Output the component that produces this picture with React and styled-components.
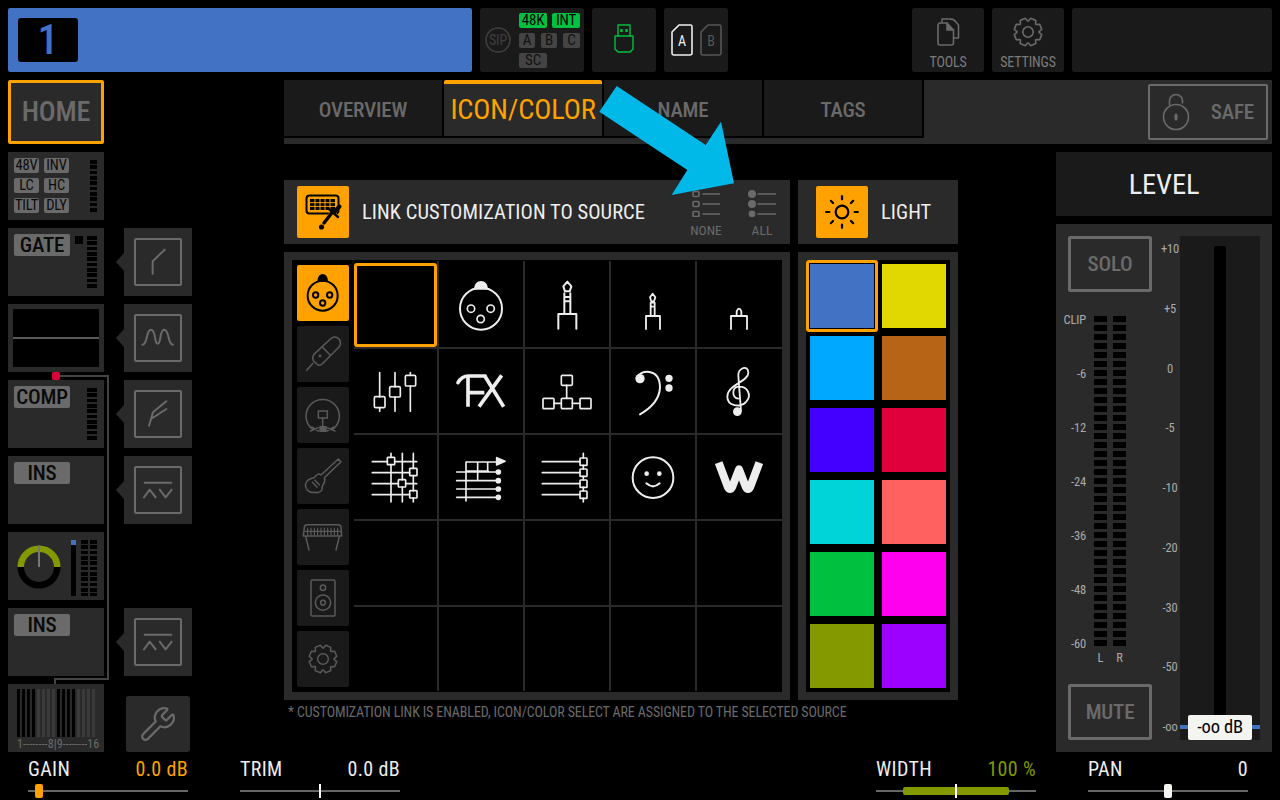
import React from "react";
import styled, { createGlobalStyle } from "styled-components";
import { Wrench, Sun } from "lucide-react";

const PANEL = "#2a2a2a";
const DARK = "#1a1a1a";
const MUTED = "#6a6a6a";
const ORANGE = "#ffa200";
const GREEN = "#00c040";
const OLIVE = "#849900";

const Global = createGlobalStyle`
  html, body { margin: 0; background: #000; }
  body { font-family: Roboto, "Liberation Sans", sans-serif; font-stretch: 85%; letter-spacing: -0.01em; }
  * { box-sizing: border-box; }
`;

const Screen = styled.div`
  position: relative;
  width: 1280px;
  height: 800px;
  background: #000;
  overflow: hidden;
`;

/* top bar */
const TopBar = styled.header`
  display: flex;
  gap: 8px;
  height: 80px;
  padding: 8px;
`;
const ChannelHeader = styled.div`
  width: 464px;
  background: #4272c4;
  border-radius: 2px;
  padding: 10px;
`;
const ChannelNumber = styled.div`
  width: 60px;
  height: 44px;
  background: #000;
  border-radius: 3px;
  color: #4272c4;
  font-size: 42px;
  font-weight: 500;
  line-height: 44px;
  text-align: center;
`;
const TopPanel = styled.div`
  width: ${(p) => p.$w}px;
  margin-left: ${(p) => p.$ml || 0}px;
  background: ${DARK};
  border-radius: 3px;
  display: flex;
  align-items: center;
  justify-content: center;
`;
const ToolPanel = styled(TopPanel)`
  flex-direction: column;
  justify-content: flex-start;
  padding-top: 9px;
`;
const ToolLabel = styled.span`
  color: #7a7a7a;
  font-size: 14px;
  line-height: 16px;
  margin-top: 7px;
`;
const SipPanel = styled(TopPanel)`
  justify-content: flex-start;
  padding-left: 5px;
  gap: 8px;
`;
const ChipStack = styled.div`
  display: flex;
  flex-direction: column;
  gap: 5px;
`;
const ChipRow = styled.div`
  display: flex;
  gap: ${(p) => p.$gap}px;
`;
const StatusChip = styled.span`
  width: ${(p) => p.$w}px;
  height: 15px;
  background: ${(p) => (p.$on ? GREEN : "#444")};
  color: ${(p) => (p.$on ? "#000" : "#111")};
  border-radius: 2px;
  font-size: 15px;
  line-height: 15px;
  text-align: center;
`;
const CardGroup = styled.div`
  display: flex;
  gap: 7px;
`;

/* main layout */
const Main = styled.div`
  display: flex;
  height: 672px;
  padding-left: 8px;
`;
const LeftColumn = styled.aside`
  position: relative;
  width: 184px;
  display: flex;
  flex-direction: column;
  gap: 8px;
`;
const HomeButton = styled.div`
  width: 96px;
  height: 64px;
  background: ${PANEL};
  border: 3px solid ${ORANGE};
  border-radius: 2px;
  color: ${MUTED};
  font-size: 28px;
  font-weight: 500;
  line-height: 58px;
  text-align: center;
`;
const ModuleRow = styled.div`
  display: flex;
  height: 68px;
  gap: 20px;
  align-items: ${(p) => (p.$end ? "flex-end" : "stretch")};
`;
const Module = styled.div`
  position: relative;
  width: 96px;
  height: 68px;
  background: ${PANEL};
  flex: none;
`;
const ModuleTag = styled.span`
  position: absolute;
  left: 6px;
  top: 6px;
  width: 56px;
  height: 22px;
  background: ${MUTED};
  border-radius: 2px;
  color: #0a0a0a;
  font-size: 21px;
  font-weight: 500;
  line-height: 22px;
  text-align: center;
`;
const ModuleMeter = styled.div`
  position: absolute;
  left: ${(p) => p.$x}px;
  top: ${(p) => p.$y}px;
  width: ${(p) => p.$w}px;
  height: ${(p) => p.$h}px;
  background: repeating-linear-gradient(to bottom, #000 0 3.7px, transparent 3.7px 5.33px);
`;
const ClipLed = styled.div`
  position: absolute;
  left: 67px;
  top: 8px;
  width: 8px;
  height: 8px;
  background: #000;
`;
const SideBox = styled.div`
  position: relative;
  width: 68px;
  height: 68px;
  background: ${PANEL};
  display: flex;
  align-items: center;
  justify-content: center;
  flex: none;
  &::before {
    content: "";
    position: absolute;
    left: -8px;
    top: 25px;
    border-style: solid;
    border-width: 9px 8px 9px 0;
    border-color: transparent ${PANEL} transparent transparent;
  }
`;
const SideIconFrame = styled.svg`
  width: 48px;
  height: 48px;
  border: 2px solid ${MUTED};
  border-radius: 2px;
  fill: none;
  stroke: ${MUTED};
  stroke-width: 6;
  stroke-linecap: round;
  stroke-linejoin: round;
`;
const FlagGrid = styled.div`
  position: absolute;
  left: 6px;
  top: 6px;
  display: grid;
  grid-template-columns: 25px 25px;
  grid-auto-rows: 15px;
  gap: 5px;
`;
const Flag = styled.span`
  background: ${MUTED};
  border-radius: 2px;
  color: #0a0a0a;
  font-size: 14.5px;
  line-height: 15px;
  text-align: center;
  white-space: nowrap;
`;
const EqScreen = styled.div`
  position: absolute;
  inset: 5px;
  background: #000;
  display: flex;
  align-items: center;
  &::after {
    content: "";
    width: 100%;
    height: 2px;
    background: #5a5a5a;
    margin-top: -1px;
  }
`;
const KnobSvg = styled.svg`
  position: absolute;
  left: 6px;
  top: 10px;
  width: 50px;
  height: 50px;
`;
const KnobLevel = styled.div`
  position: absolute;
  left: 63px;
  top: 8px;
  width: 5px;
  height: 56px;
  background: #000;
  &::before {
    content: "";
    display: block;
    height: 5px;
    background: #4272c4;
  }
`;
const MixerBars = styled.div`
  position: absolute;
  left: 9px;
  top: 5px;
  display: flex;
  gap: 1.67px;
`;
const MixerBar = styled.span`
  width: 3.33px;
  height: 48px;
  background: ${(p) => (p.$dim ? "#3a3a3a" : "#000")};
`;
const MixerScale = styled.span`
  position: absolute;
  left: 9px;
  top: 53px;
  color: ${MUTED};
  font-size: 12px;
  line-height: 14px;
  white-space: nowrap;
  letter-spacing: 0.1px;
`;
const WrenchButton = styled.div`
  width: 64px;
  height: 56px;
  margin-left: 2px;
  background: ${PANEL};
  border-radius: 3px;
  color: ${MUTED};
  display: flex;
  align-items: center;
  justify-content: center;
`;
const RouteOverlay = styled.svg`
  position: absolute;
  left: 0;
  top: 0;
  width: 120px;
  height: 672px;
  pointer-events: none;
`;

/* centre */
const Center = styled.section`
  width: 988px;
  margin-left: 92px;
`;
const TabBar = styled.nav`
  display: flex;
  justify-content: space-between;
  height: 64px;
  background: ${PANEL};
`;
const TabStrip = styled.div`
  display: flex;
  gap: 2px;
  width: 640px;
  height: 58px;
  padding-bottom: 2px;
  background: #000;
`;
const Tab = styled.div`
  width: 158px;
  background: ${(p) => (p.$active ? PANEL : DARK)};
  border-top: 4px solid ${(p) => (p.$active ? ORANGE : DARK)};
  border-radius: ${(p) => (p.$active ? "2px 2px 0 0" : "0")};
  color: ${(p) => (p.$active ? ORANGE : MUTED)};
  font-size: ${(p) => (p.$active ? 28.5 : 21)}px;
  font-weight: ${(p) => (p.$active ? 400 : 500)};
  line-height: 52px;
  text-align: center;
`;
const SafeButton = styled.div`
  width: 120px;
  height: 56px;
  margin: 4px 4px 0 0;
  border: 2px solid ${MUTED};
  border-radius: 2px;
  color: ${MUTED};
  display: flex;
  align-items: center;
  justify-content: space-between;
  padding: 0 12px 0 12px;
  font-size: 21px;
  font-weight: 500;
`;
const Workspace = styled.div`
  display: flex;
  justify-content: space-between;
`;
const Editor = styled.div`
  width: 674px;
  padding-top: 36px;
`;
const EditorRow = styled.div`
  display: flex;
  gap: 8px;
  margin-bottom: 8px;
`;
const HeaderBox = styled.div`
  width: ${(p) => p.$w}px;
  height: 64px;
  background: ${PANEL};
  display: flex;
  align-items: center;
  padding-left: ${(p) => p.$pl}px;
  color: #eee;
  font-size: 20.5px;
  letter-spacing: 0.05px;
`;
const HeaderIcon = styled.div`
  width: 52px;
  height: 52px;
  background: ${ORANGE};
  border-radius: 2px;
  color: #000;
  margin-right: 13px;
  display: flex;
  align-items: center;
  justify-content: center;
  flex: none;
`;
const Selectors = styled.div`
  display: flex;
  gap: 28px;
  margin-left: auto;
  margin-right: 14px;
  align-self: flex-start;
  padding-top: 9px;
`;
const Selector = styled.div`
  width: 28px;
  display: flex;
  flex-direction: column;
  align-items: center;
  color: ${MUTED};
  font-size: 13.5px;
  line-height: 14px;
  gap: 6px;
`;
const IconPanel = styled.div`
  width: 506px;
  height: 448px;
  background: #000;
  border: 8px solid ${PANEL};
  display: flex;
`;
const CategoryColumn = styled.div`
  display: flex;
  flex-direction: column;
  gap: 5px;
  padding: 5px;
  width: 62px;
`;
const CategoryButton = styled.div`
  width: 52px;
  height: 56px;
  background: ${(p) => (p.$active ? ORANGE : DARK)};
  border-radius: 2px;
`;
const CategorySvg = styled.svg`
  display: block;
  width: 100%;
  height: 100%;
  fill: none;
  stroke: ${(p) => (p.$active ? "#000" : "#5a5a5a")};
  stroke-width: ${(p) => (p.$active ? 6 : 4.5)};
  stroke-linecap: round;
  stroke-linejoin: round;
`;
const IconGrid = styled.div`
  display: grid;
  grid-template-columns: 85px 86px 86px 86px 85px;
  grid-template-rows: 88px 86px 86px 86px 84px;
  margin-top: 1px;
`;
const Cell = styled.div`
  position: relative;
  border-right: ${(p) => (p.$lastCol ? "0" : `2px solid ${PANEL}`)};
  border-bottom: ${(p) => (p.$lastRow ? "0" : `2px solid ${PANEL}`)};
  &[data-selected="true"]::after {
    content: "";
    position: absolute;
    inset: 2px 0 0 0;
    border: 3px solid ${ORANGE};
    border-radius: 3px;
  }
`;
const CellSvg = styled.svg`
  display: block;
  width: 84px;
  height: 84px;
  margin-top: ${(p) => (p.$firstRow ? 2 : 0)}px;
  margin-left: ${(p) => (p.$firstCol ? 0 : 1)}px;
  fill: none;
  stroke: #eee;
  stroke-width: 6;
  stroke-linecap: round;
  stroke-linejoin: round;
`;
const ColorPanel = styled.div`
  width: 160px;
  height: 448px;
  background: #000;
  border: 8px solid ${PANEL};
  display: grid;
  grid-template-columns: 64px 64px;
  grid-auto-rows: 64px;
  gap: 8px;
  padding: 4px;
  padding-right: 0;
`;
const Swatch = styled.div`
  position: relative;
  background: ${(p) => p.$c};
  &[data-selected="true"]::after {
    content: "";
    position: absolute;
    inset: -4px;
    border: 3px solid ${ORANGE};
    border-radius: 3px;
  }
`;
const Footnote = styled.p`
  margin: -4px 0 0 4px;
  color: ${MUTED};
  font-size: 14px;
  line-height: 16px;
  letter-spacing: -0.12px;
`;

/* right */
const RightColumn = styled.div`
  width: 216px;
  padding-top: 8px;
  display: flex;
  flex-direction: column;
  gap: 8px;
`;
const LevelTitle = styled.div`
  height: 64px;
  background: ${DARK};
  color: #eee;
  font-size: 28.5px;
  line-height: 65px;
  text-align: center;
`;
const FaderPanel = styled.div`
  height: 528px;
  background: ${PANEL};
  padding: 12px;
  display: grid;
  grid-template-columns: 84px 28px 80px;
`;
const MeterColumn = styled.div`
  display: flex;
  flex-direction: column;
  height: 504px;
`;
const OutlineButton = styled.div`
  height: 56px;
  flex: none;
  border: 3px solid ${MUTED};
  border-radius: 2px;
  color: ${MUTED};
  font-size: 21px;
  font-weight: 500;
  line-height: 50px;
  text-align: center;
  margin-top: ${(p) => (p.$bottom ? "auto" : 0)};
`;
const MeterBlock = styled.div`
  display: flex;
  margin-top: 19px;
`;
const MeterLabels = styled.div`
  width: 18px;
  height: 342px;
  display: flex;
  flex-direction: column;
  justify-content: space-between;
  align-items: flex-end;
  color: #aaa;
  font-size: 12.5px;
  line-height: 18px;
  white-space: nowrap;
`;
const MeterChannels = styled.div`
  display: flex;
  gap: 6px;
  margin: 5px 0 0 8px;
`;
const MeterChannel = styled.div`
  width: 13px;
  display: flex;
  flex-direction: column;
  align-items: center;
  color: #aaa;
  font-size: 12.5px;
  line-height: 14px;
  gap: 5px;
`;
const MeterStrip = styled.div`
  width: 13px;
  height: 330px;
  background: repeating-linear-gradient(to bottom, #000 0 6px, transparent 6px 9px);
`;
const FaderScale = styled.div`
  height: 494px;
  margin-top: 5px;
  padding-left: 8px;
  display: flex;
  flex-direction: column;
  justify-content: space-between;
  align-items: center;
  color: #aaa;
  font-size: 12.5px;
  line-height: 16px;
`;
const FaderTrack = styled.div`
  position: relative;
  height: 504px;
  background: ${DARK};
  padding-top: 10px;
`;
const FaderSlot = styled.div`
  width: 12px;
  height: 484px;
  margin: 0 auto;
  background: #000;
  border-radius: 2px 2px 0 0;
`;
const FaderLine = styled.div`
  position: absolute;
  left: 0;
  right: 0;
  bottom: 11px;
  height: 4px;
  background: #4272c4;
`;
const FaderHandle = styled.div`
  position: absolute;
  left: 8px;
  bottom: 0;
  width: 64px;
  height: 25px;
  background: #f4f4f0;
  border-radius: 2px;
  color: #000;
  font-size: 18.5px;
  line-height: 25px;
  text-align: center;
`;

/* bottom */
const BottomBar = styled.footer`
  display: flex;
  justify-content: space-between;
  height: 48px;
  padding: 7px 32px 0 28px;
`;
const SliderGroup = styled.div`
  display: flex;
  gap: 52px;
`;
const Slider = styled.div`
  width: 160px;
`;
const SliderHead = styled.div`
  display: flex;
  justify-content: space-between;
  color: #eee;
  font-size: 20px;
  line-height: 20px;
  letter-spacing: 0.35px;
`;
const SliderValue = styled.span`
  color: ${(p) => p.$c || "#eee"};
`;
const SliderTrack = styled.div`
  position: relative;
  height: 2px;
  margin-top: 11px;
  background: #666;
`;
const SliderFill = styled.div`
  position: absolute;
  left: 27px;
  top: -3px;
  width: 106px;
  height: 8px;
  background: ${OLIVE};
  border-radius: 2px;
`;
const SliderThumb = styled.div`
  position: absolute;
  left: ${(p) => p.$x}px;
  top: -6px;
  width: 8px;
  height: 14px;
  background: ${(p) => p.$c};
  border-radius: 2px;
`;
const SliderMark = styled.div`
  position: absolute;
  left: 79px;
  top: -6px;
  width: 2px;
  height: 14px;
  background: #fff;
`;
const Arrow = styled.svg`
  position: absolute;
  left: 0;
  top: 0;
  width: 1280px;
  height: 800px;
  pointer-events: none;
`;

const gear = (cx, cy, R, r) => {
  let d = "";
  for (let i = 0; i < 8; i++) {
    const a = (i * Math.PI) / 4 + Math.PI / 8;
    const pts = [[r, -0.36], [R, -0.2], [R, 0.2], [r, 0.36]];
    pts.forEach(([q, o], j) => {
      d += `${i === 0 && j === 0 ? "M" : "L"}${(cx + q * Math.cos(a + o)).toFixed(2)} ${(cy + q * Math.sin(a + o)).toFixed(2)} `;
    });
  }
  return d + "Z";
};

const SimpleSvg = styled.svg`
  fill: none;
  stroke: ${(p) => p.$c || "#6a6a6a"};
  stroke-width: ${(p) => p.$sw || 1.6};
  stroke-linecap: round;
  stroke-linejoin: round;
  display: block;
  flex: none;
`;

const Bracket = ({ cx, top, half, bottom }) => (
  <path d={`M${cx - half} ${bottom} V${top} H${cx + half} V${bottom}`} />
);

const cellIcons = [
  null,
  <>
    <circle cx="588" cy="158" r="63" />
    <path d="M570 98 Q572 78 588 78 Q604 78 606 98 Z" fill="#eee" />
    <circle cx="558" cy="158" r="11" strokeWidth="5" />
    <circle cx="617" cy="158" r="11" strokeWidth="5" />
    <circle cx="587" cy="189" r="11" strokeWidth="5" />
  </>,
  <g strokeWidth="6">
    <path d="M142 77 L154 91 L149 106 H135 L130 91 Z" />
    <path d="M133 112 V172 M151 112 V172 M133 123 H151 M133 136 H151" />
    <Bracket cx={142} top={174} half={27} bottom={218} />
  </g>,
  <g strokeWidth="5.5">
    <path d="M398 113 L406 124 L402 136 H394 L390 124 Z" />
    <path d="M392 140 H404 M392 152 H404 M392 140 V180 M404 140 V180" />
    <Bracket cx={399} top={180} half={21} bottom={219} />
  </g>,
  <g strokeWidth="5.5">
    <path d="M650 178 V166 Q657 150 664 166 V178" />
    <Bracket cx={657} top={180} half={24} bottom={219} />
  </g>,
  <g strokeWidth="5">
    <path d="M284 350 V422 M284 455 V466 M330 350 V392 M330 423 V466 M376 350 V358 M376 390 V466" />
    <rect x="268" y="422" width="32" height="33" rx="4" />
    <rect x="314" y="392" width="32" height="31" rx="4" />
    <rect x="361" y="358" width="31" height="32" rx="4" />
  </g>,
  <g strokeWidth="11" strokeLinecap="butt">
    <path d="M519 380 Q530 360 550 360 H600" strokeLinecap="round" />
    <path d="M549 362 V452 M549 410 H598" />
    <path d="M650 358 L582 452 M598 358 L656 452" />
  </g>,
  <g strokeWidth="5">
    <rect x="124" y="358" width="33" height="30" rx="3" />
    <rect x="69" y="427" width="33" height="31" rx="3" />
    <rect x="124" y="427" width="33" height="31" rx="3" />
    <rect x="180" y="427" width="33" height="31" rx="3" />
    <path d="M140 388 V427 M102 442 H124 M157 442 H180" />
  </g>,
  <>
    <path d="M350 365 C360 340 420 335 420 395 C418 430 390 458 360 475" />
    <circle cx="360" cy="368" r="14" fill="#eee" stroke="none" />
    <circle cx="447" cy="367" r="11" fill="#eee" stroke="none" />
    <circle cx="447" cy="396" r="11" fill="#eee" stroke="none" />
  </>,
  <g strokeWidth="5.5">
    <path d="M663 465 L655 360 C653 335 685 325 685 350 C685 378 622 385 622 422 C622 450 660 456 678 438 C698 415 680 390 655 392 C635 395 635 425 655 428" />
    <circle cx="652" cy="467" r="13" fill="#eee" stroke="none" />
  </g>,
  <g strokeWidth="5">
    <path d="M262 617 H307 M329 617 H395 M262 650 H374 M262 683 H340 M362 683 H395 M262 716 H374 M318 592 V604 M318 626 V738 M352 592 V671 M352 693 V738 M385 592 V637 M385 659 V704 M385 726 V738" />
    <rect x="307" y="604" width="22" height="22" rx="2" />
    <rect x="374" y="637" width="22" height="22" rx="2" />
    <rect x="340" y="671" width="22" height="22" rx="2" />
    <rect x="374" y="704" width="22" height="22" rx="2" />
  </g>,
  <g strokeWidth="5">
    <path d="M515 648 H640 M515 674 H640 M515 699 H640 M515 724 H640 M543 618 V735 M543 618 H635 M578 618 V670 M608 618 V645 M543 645 H610" />
    <path d="M635 605 L660 616 L635 627 Z" fill="#eee" />
    <circle cx="640" cy="648" r="6" fill="#eee" />
    <circle cx="640" cy="674" r="6" fill="#eee" />
    <circle cx="640" cy="699" r="6" fill="#eee" />
    <circle cx="640" cy="724" r="6" fill="#eee" />
  </g>,
  <g strokeWidth="5">
    <path d="M67 617 H180 M67 650 H180 M67 683 H180 M67 716 H180 M190 592 V606 M190 628 V639 M190 661 V672 M190 694 V705 M190 727 V738" />
    <rect x="180" y="606" width="21" height="22" rx="2" />
    <rect x="180" y="639" width="21" height="22" rx="2" />
    <rect x="180" y="672" width="21" height="22" rx="2" />
    <rect x="180" y="705" width="21" height="22" rx="2" />
  </g>,
  <>
    <circle cx="399" cy="665" r="61" />
    <circle cx="380" cy="653" r="7" fill="#eee" stroke="none" />
    <circle cx="418" cy="653" r="7" fill="#eee" stroke="none" />
    <path d="M379 682 Q399 700 419 682" />
  </>,
  <path strokeWidth="24" strokeLinecap="butt" d="M596 620 L623 692 Q630 706 637 692 L657 640 L677 692 Q684 706 691 692 L718 620" />,
];
const cellBoxes = [
  "207 21", "465 21", "18 21", "276 21", "534 21",
  "207 279", "465 279", "18 279", "276 279", "534 279",
  "207 537", "465 537", "18 537", "276 537", "534 537",
];

const categories = [
  { box: "36 30", body: (
    <>
      <circle cx="113" cy="122" r="45" />
      <path d="M100 78 Q102 60 113 60 Q124 60 126 78 Z" fill="#000" />
      <circle cx="92" cy="120" r="8" />
      <circle cx="134" cy="120" r="8" />
      <circle cx="113" cy="144" r="8" />
    </>
  ) },
  { box: "36 213", body: (
    <>
      <path d="M87 298 L136 252 Q150 240 162 252 Q172 265 160 278 L112 326 Q104 334 96 328 L86 318 Q80 308 87 298 Z" />
      <path d="M112 276 L136 301" />
      <path d="M84 325 L65 346" />
      <circle cx="105" cy="303" r="2" />
    </>
  ) },
  { box: "36 396", body: (
    <>
      <path d="M84 524 A50 50 0 1 1 142 524" />
      <rect x="100" y="468" width="27" height="21" />
      <path d="M113 489 V520 M76 528 L100 518 M150 528 L126 518 M80 516 L100 528 M147 516 L126 528" />
      <rect x="105" y="515" width="18" height="14" fill="#5a5a5a" />
    </>
  ) },
  { box: "36 579", body: (
    <>
      <path d="M160 612 L168 620 L118 668 Q122 678 115 688 Q110 695 112 702 Q105 716 88 712 Q75 714 66 704 Q56 690 68 676 Q78 668 88 668 Q98 652 108 660 Z" />
      <path d="M82 682 L96 696 M90 676 L103 689" />
    </>
  ) },
  { box: "36 27", body: (
    <>
      <path d="M58 82 Q58 74 68 74 H158 Q168 74 168 82 L170 108 H55 Z" />
      <path d="M60 94 H166 M68 84 V104 M78 84 V104 M88 84 V104 M98 84 V104 M108 84 V104 M118 84 V104 M128 84 V104 M138 84 V104 M148 84 V104 M158 84 V104" strokeWidth="3.5" />
      <path d="M62 110 L72 150 M163 110 L153 150" />
    </>
  ) },
  { box: "36 210", body: (
    <>
      <rect x="78" y="240" width="72" height="108" rx="4" />
      <circle cx="114" cy="263" r="8" />
      <circle cx="114" cy="308" r="23" />
      <circle cx="114" cy="308" r="7" />
    </>
  ) },
  { box: "36 393", body: (
    <>
      <path d={gear(114, 477, 42, 33)} />
      <circle cx="114" cy="477" r="16" />
    </>
  ) },
];

const swatches = [
  "#4272c4", "#e0d800", "#00a8ff", "#b86416", "#4400ff", "#e0003c",
  "#00d4d8", "#ff6060", "#00c040", "#ff00ee", "#849900", "#9c00ff",
];

const MixerScaleBars = () => (
  <MixerBars>
    {Array.from({ length: 16 }, (_, i) => (
      <MixerBar key={i} $dim={i % 8 >= 4} />
    ))}
  </MixerBars>
);

const SideIcon = ({ x, y, d }) => (
  <SideBox>
    <SideIconFrame viewBox={`${x + 6} ${y + 6} 132 132`}>
      <path d={d} />
    </SideIconFrame>
  </SideBox>
);

const INS_PATH = "M435 579 H515 M433 623 L450 600 L468 623 M480 600 L498 623 L516 600";

export default function App() {
  return (
    <>
      <Global />
      <Screen>
        <TopBar>
          <ChannelHeader>
            <ChannelNumber>1</ChannelNumber>
          </ChannelHeader>
          <SipPanel $w={104}>
            <SimpleSvg width="26" height="26" viewBox="0 0 26 26" $c="#3f3f3f">
              <circle cx="13" cy="13" r="12" />
              <text x="13" y="18" textAnchor="middle" fontSize="14" fill="#3f3f3f" stroke="none">SIP</text>
            </SimpleSvg>
            <ChipStack>
              <ChipRow $gap={5}>
                <StatusChip $w={28} $on>48K</StatusChip>
                <StatusChip $w={28} $on>INT</StatusChip>
              </ChipRow>
              <ChipRow $gap={6}>
                <StatusChip $w={16}>A</StatusChip>
                <StatusChip $w={16}>B</StatusChip>
                <StatusChip $w={17}>C</StatusChip>
              </ChipRow>
              <ChipRow $gap={0}>
                <StatusChip $w={28}>SC</StatusChip>
              </ChipRow>
            </ChipStack>
          </SipPanel>
          <TopPanel $w={64}>
            <SimpleSvg width="24" height="32" viewBox="0 0 24 32" $c={GREEN} $sw={1.4}>
              <path d="M6 12 V1 H18 V12" />
              <path d="M3 12 H21 V25 L18 28 H6 L3 25 Z" />
              <path d="M9.5 5 V8 M14.5 5 V8" strokeWidth="2.4" strokeLinecap="butt" />
            </SimpleSvg>
          </TopPanel>
          <TopPanel $w={64}>
            <CardGroup>
              <SimpleSvg width="22" height="32" viewBox="0 0 22 32" $c="#eee">
                <path d="M1 8 L8 1 H20 Q21 1 21 3 V29 Q21 31 19 31 H3 Q1 31 1 29 Z" />
                <text x="11" y="21.5" textAnchor="middle" fontSize="14" fill="#eee" stroke="none">A</text>
              </SimpleSvg>
              <SimpleSvg width="22" height="32" viewBox="0 0 22 32" $c="#555">
                <path d="M1 8 L8 1 H20 Q21 1 21 3 V29 Q21 31 19 31 H3 Q1 31 1 29 Z" />
                <text x="11" y="21.5" textAnchor="middle" fontSize="14" fill="#555" stroke="none">B</text>
              </SimpleSvg>
            </CardGroup>
          </TopPanel>
          <ToolPanel $w={72} $ml={176}>
            <SimpleSvg width="24" height="30" viewBox="0 0 24 30" $c="#6a6a6a">
              <path d="M6 5 V2 H14 Q18 2 20 5 L22.5 8 V21 H18" />
              <path d="M2 9 Q2 6 4 6 H11 L17.5 13 V26 Q17.5 28 15.5 28 H4 Q2 28 2 26 Z" />
              <path d="M11 6 V13 H17.5" fill="#6a6a6a" />
            </SimpleSvg>
            <ToolLabel>TOOLS</ToolLabel>
          </ToolPanel>
          <ToolPanel $w={72}>
            <SimpleSvg width="32" height="30" viewBox="0 1 32 30">
              <path d={gear(16, 16, 14, 11)} />
              <circle cx="16" cy="16" r="5.2" />
            </SimpleSvg>
            <ToolLabel>SETTINGS</ToolLabel>
          </ToolPanel>
          <TopPanel $w={200} />
        </TopBar>

        <Main>
          <LeftColumn>
            <HomeButton>HOME</HomeButton>
            <ModuleRow>
              <Module>
                <FlagGrid>
                  <Flag>48V</Flag><Flag>INV</Flag>
                  <Flag>LC</Flag><Flag>HC</Flag>
                  <Flag>TILT</Flag><Flag>DLY</Flag>
                </FlagGrid>
                <ModuleMeter $x={82} $y={8} $w={7} $h={53} />
              </Module>
            </ModuleRow>
            <ModuleRow>
              <Module>
                <ModuleTag>GATE</ModuleTag>
                <ClipLed />
                <ModuleMeter $x={79} $y={8} $w={10} $h={53} />
              </Module>
              <SideIcon x={403} y={715} d="M459 822 V785 L495 750" />
            </ModuleRow>
            <ModuleRow>
              <Module>
                <EqScreen />
              </Module>
              <SideIcon x={403} y={73} d="M428 165 C445 165 438 120 454 120 C470 120 462 162 474 162 C486 162 478 120 494 120 C510 120 503 165 520 165" />
            </ModuleRow>
            <ModuleRow>
              <Module>
                <ModuleTag>COMP</ModuleTag>
                <ModuleMeter $x={79} $y={8} $w={10} $h={53} />
              </Module>
              <SideIcon x={403} y={301} d="M448 408 L460 368 L500 335 M454 388 L500 358" />
            </ModuleRow>
            <ModuleRow>
              <Module>
                <ModuleTag>INS</ModuleTag>
              </Module>
              <SideIcon x={403} y={529} d={INS_PATH} />
            </ModuleRow>
            <ModuleRow>
              <Module>
                <KnobSvg viewBox="0 0 50 50">
                  <path d="M6.75 25 A18.25 18.25 0 0 0 43.25 25" fill="none" stroke="#000" strokeWidth="6.5" />
                  <path d="M6.75 25 A18.25 18.25 0 0 1 43.25 25" fill="none" stroke={OLIVE} strokeWidth="6.5" />
                  <path d="M25 3.5 V25" stroke="#777" strokeWidth="2" />
                </KnobSvg>
                <KnobLevel />
                <ModuleMeter $x={73} $y={8} $w={7} $h={56} />
                <ModuleMeter $x={82} $y={8} $w={7} $h={56} />
              </Module>
            </ModuleRow>
            <ModuleRow>
              <Module>
                <ModuleTag>INS</ModuleTag>
              </Module>
              <SideIcon x={403} y={529} d={INS_PATH} />
            </ModuleRow>
            <ModuleRow $end>
              <Module>
                <MixerScaleBars />
                <MixerScale>1--------8|9--------16</MixerScale>
              </Module>
              <WrenchButton>
                <Wrench size={38} strokeWidth={1.4} />
              </WrenchButton>
            </ModuleRow>
            <RouteOverlay viewBox="0 0 120 672">
              <path d="M48 296 H100 V599 H47 V604" fill="none" stroke="#444" strokeWidth="2" />
              <rect x="44" y="292" width="8" height="8" rx="2" fill="#e0003c" />
            </RouteOverlay>
          </LeftColumn>

          <Center>
            <TabBar>
              <TabStrip>
                <Tab>OVERVIEW</Tab>
                <Tab $active>ICON/COLOR</Tab>
                <Tab>NAME</Tab>
                <Tab>TAGS</Tab>
              </TabStrip>
              <SafeButton>
                <SimpleSvg width="28" height="38" viewBox="0 0 28 38">
                  <circle cx="14" cy="24" r="12.5" />
                  <path d="M7.5 12 V8 A6.5 6.5 0 0 1 20.5 8 V10" />
                  <path d="M14 22 V26" strokeWidth="3" />
                </SimpleSvg>
                SAFE
              </SafeButton>
            </TabBar>
            <Workspace>
              <Editor>
                <EditorRow>
                  <HeaderBox $w={506} $pl={13}>
                    <HeaderIcon>
                      <SimpleSvg width="52" height="52" viewBox="0 0 52 52" $c="#000" $sw={2}>
                        <rect x="9.5" y="9.5" width="32" height="18" rx="3" />
                        <rect x="13" y="13" width="25" height="11" fill="#000" stroke="none" />
                        <path d="M13 16.7 H38 M13 20.4 H38 M18 13 V24 M23 13 V24 M28 13 V24 M33 13 V24" stroke={ORANGE} strokeWidth="1" strokeLinecap="butt" />
                        <path d="M36 28 L28 38" stroke={ORANGE} strokeWidth="7" />
                        <path d="M35.5 26 L27 37" strokeWidth="3.4" />
                        <path d="M32 23 L41 31" strokeWidth="2.4" />
                        <path d="M37 26 L42.5 20.5" strokeWidth="4" />
                        <circle cx="24.5" cy="41" r="1.6" fill="#000" />
                      </SimpleSvg>
                    </HeaderIcon>
                    LINK CUSTOMIZATION TO SOURCE
                    <Selectors>
                      <Selector>
                        <SimpleSvg width="28" height="28" viewBox="0 0 28 28">
                          <rect x="1" y="2.5" width="6" height="5" rx="1" />
                          <rect x="1" y="12.5" width="6" height="5" rx="1" />
                          <rect x="1" y="22.5" width="6" height="5" rx="1" />
                          <path d="M11 5 H28 M11 15 H28 M11 25 H28" />
                        </SimpleSvg>
                        NONE
                      </Selector>
                      <Selector>
                        <SimpleSvg width="28" height="28" viewBox="0 0 28 28">
                          <circle cx="4" cy="5" r="4" fill="#6a6a6a" stroke="none" />
                          <circle cx="4" cy="15" r="4" fill="#6a6a6a" stroke="none" />
                          <circle cx="4" cy="25" r="3.4" fill="#6a6a6a" stroke="none" />
                          <path d="M10 5 H28 M10 15 H28 M10 25 H28" />
                        </SimpleSvg>
                        ALL
                      </Selector>
                    </Selectors>
                  </HeaderBox>
                  <HeaderBox $w={160} $pl={18}>
                    <HeaderIcon>
                      <Sun size={38} strokeWidth={1.4} />
                    </HeaderIcon>
                    LIGHT
                  </HeaderBox>
                </EditorRow>
                <EditorRow>
                  <IconPanel>
                    <CategoryColumn>
                      {categories.map((c, i) => (
                        <CategoryButton key={i} $active={i === 0}>
                          <CategorySvg viewBox={`${c.box} 156 168`} $active={i === 0}>
                            {c.body}
                          </CategorySvg>
                        </CategoryButton>
                      ))}
                    </CategoryColumn>
                    <IconGrid>
                      {Array.from({ length: 25 }, (_, i) => (
                        <Cell key={i} $lastCol={i % 5 === 4} $lastRow={i >= 20} data-selected={i === 0}>
                          {cellIcons[i] && (
                            <CellSvg
                              viewBox={`${cellBoxes[i]} 252 252`}
                              $firstRow={i < 5}
                              $firstCol={i % 5 === 0}
                            >
                              {cellIcons[i]}
                            </CellSvg>
                          )}
                        </Cell>
                      ))}
                    </IconGrid>
                  </IconPanel>
                  <ColorPanel>
                    {swatches.map((c, i) => (
                      <Swatch key={c} $c={c} data-selected={i === 0} />
                    ))}
                  </ColorPanel>
                </EditorRow>
                <Footnote>* CUSTOMIZATION LINK IS ENABLED, ICON/COLOR SELECT ARE ASSIGNED TO THE SELECTED SOURCE</Footnote>
              </Editor>
              <RightColumn>
                <LevelTitle>LEVEL</LevelTitle>
                <FaderPanel>
                  <MeterColumn>
                    <OutlineButton>SOLO</OutlineButton>
                    <MeterBlock>
                      <MeterLabels>
                        {["CLIP", "-6", "-12", "-24", "-36", "-48", "-60"].map((t) => (
                          <span key={t}>{t}</span>
                        ))}
                      </MeterLabels>
                      <MeterChannels>
                        <MeterChannel><MeterStrip />L</MeterChannel>
                        <MeterChannel><MeterStrip />R</MeterChannel>
                      </MeterChannels>
                    </MeterBlock>
                    <OutlineButton $bottom>MUTE</OutlineButton>
                  </MeterColumn>
                  <FaderScale>
                    {["+10", "+5", "0", "-5", "-10", "-20", "-30", "-50", "-oo"].map((t) => (
                      <span key={t}>{t}</span>
                    ))}
                  </FaderScale>
                  <FaderTrack>
                    <FaderSlot />
                    <FaderLine />
                    <FaderHandle>-oo dB</FaderHandle>
                  </FaderTrack>
                </FaderPanel>
              </RightColumn>
            </Workspace>
          </Center>
        </Main>

        <BottomBar>
          <SliderGroup>
            <Slider>
              <SliderHead>GAIN<SliderValue $c={ORANGE}>0.0 dB</SliderValue></SliderHead>
              <SliderTrack><SliderThumb $x={7} $c={ORANGE} /></SliderTrack>
            </Slider>
            <Slider>
              <SliderHead>TRIM<SliderValue>0.0 dB</SliderValue></SliderHead>
              <SliderTrack><SliderMark /></SliderTrack>
            </Slider>
          </SliderGroup>
          <SliderGroup>
            <Slider>
              <SliderHead>WIDTH<SliderValue $c={OLIVE}>100 %</SliderValue></SliderHead>
              <SliderTrack><SliderFill /><SliderMark /></SliderTrack>
            </Slider>
            <Slider>
              <SliderHead>PAN<SliderValue>0</SliderValue></SliderHead>
              <SliderTrack><SliderThumb $x={76} $c="#f4f4f0" /></SliderTrack>
            </Slider>
          </SliderGroup>
        </BottomBar>

        <Arrow viewBox="0 0 1280 800">
          <path d="M616.7 86 L705.7 145 L721 121.7 L734 183.3 L671.7 195 L687.3 170 L599.3 111.7 Z" fill="#00b9e8" />
        </Arrow>
      </Screen>
    </>
  );
}
